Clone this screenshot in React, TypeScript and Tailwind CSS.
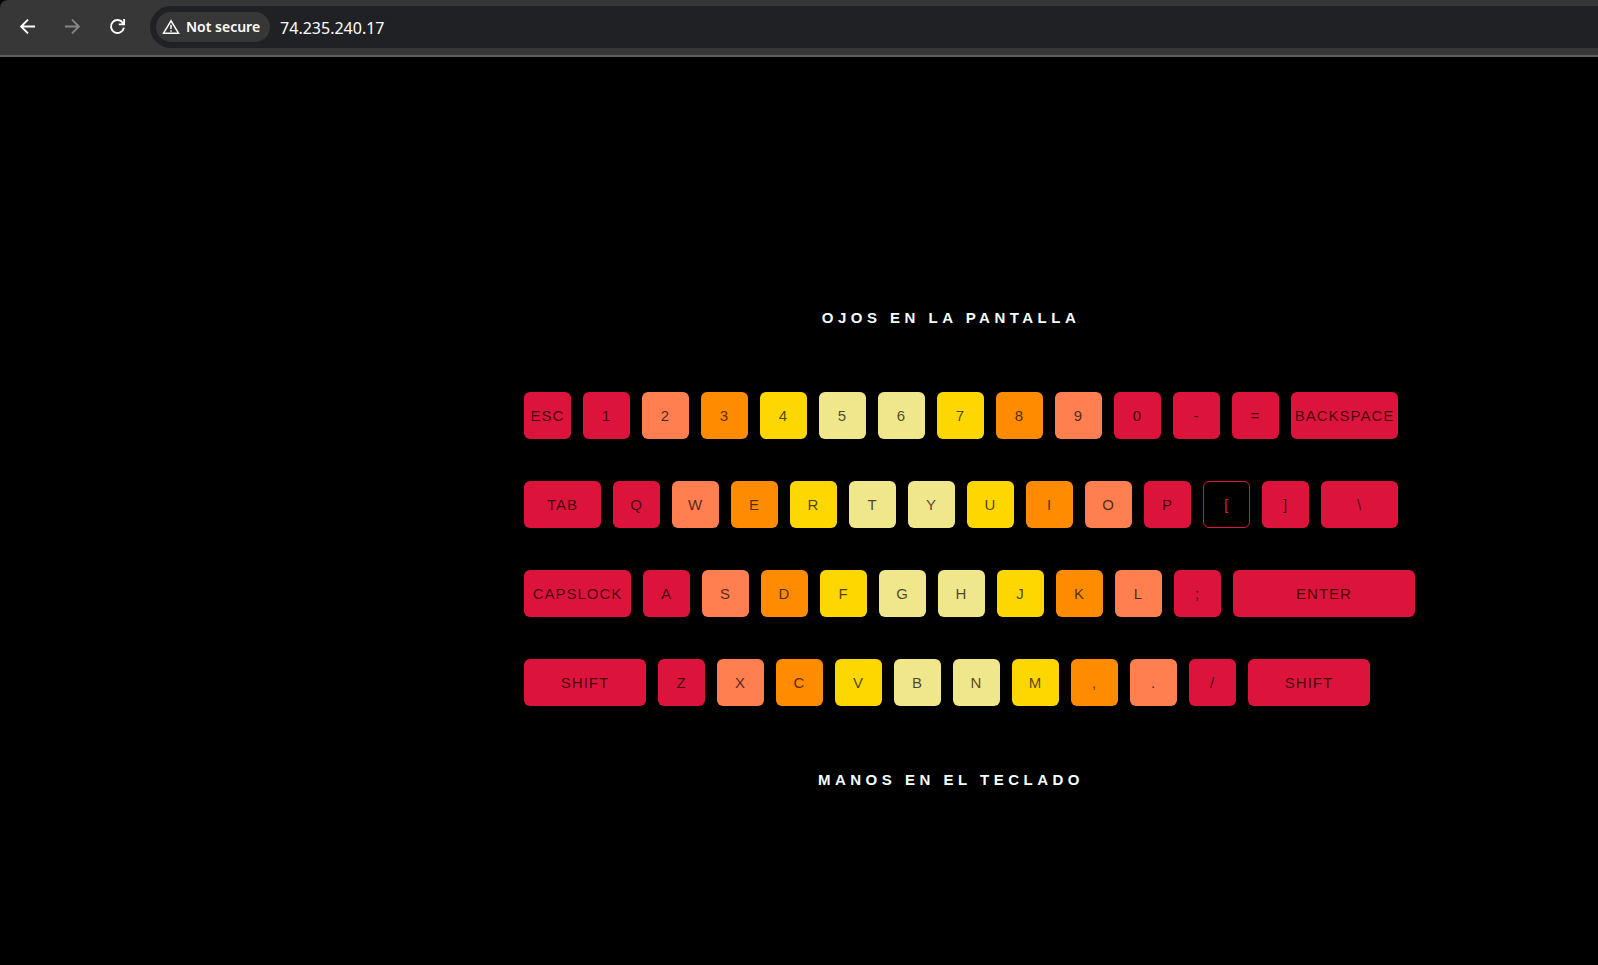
import type { ReactNode } from "react";

const crimson = "bg-[#dc143c] text-black/70";
const coral = "bg-[#ff7f50] text-black/70";
const orange = "bg-[#ff8c00] text-black/70";
const gold = "bg-[#ffd700] text-black/70";
const khaki = "bg-[#f0e68c] text-black/70";
const selected = "border border-[#dc143c] bg-transparent text-[#dc143c]";

const fingerColors = [crimson, coral, orange, gold, khaki, khaki, gold, orange, coral, crimson];

type KeySpec = { label: string; color: string; width: string };

const unit = "w-[47px]";

function letters(chars: string): KeySpec[] {
  return chars.split("").map((label, i) => ({ label, color: fingerColors[i] ?? crimson, width: unit }));
}

function wide(label: string, width: string): KeySpec {
  return { label, color: crimson, width };
}

const rows: KeySpec[][] = [
  [wide("ESC", unit), ...letters("1234567890-="), wide("BACKSPACE", "w-[107px]")],
  [
    wide("TAB", "w-[77px]"),
    ...letters("QWERTYUIOP"),
    { label: "[", color: selected, width: unit },
    wide("]", unit),
    wide("\\", "w-[77px]"),
  ],
  [wide("CAPSLOCK", "w-[107px]"), ...letters("ASDFGHJKL;"), wide("ENTER", "w-[182px]")],
  [wide("SHIFT", "w-[122px]"), ...letters("ZXCVBNM,./"), wide("SHIFT", "w-[122px]")],
];

function Key({ label, color, width }: KeySpec) {
  return (
    <button
      type="button"
      className={`flex h-[47px] shrink-0 items-center justify-center rounded-md pt-0.5 text-[15px] tracking-[1px] ${width} ${color}`}
    >
      {label}
    </button>
  );
}

function NavIcon({ children }: { children: ReactNode }) {
  return (
    <svg viewBox="0 0 24 24" className="size-6" fill="none" stroke="currentColor" strokeWidth="1.9" aria-hidden="true">
      {children}
    </svg>
  );
}

function BrowserBar() {
  return (
    <header className="bg-black">
      <div className="flex items-center rounded-tl-lg border-b-2 border-[#5f5f5f] bg-[#373737] pt-1.5 pb-[7px] pl-4 font-['Noto_Sans',sans-serif] text-white">
        <nav className="flex items-center gap-[21px]">
          <button type="button" aria-label="Back">
            <NavIcon>
              <path d="M19 11.5H5M12 4.6L5.1 11.5L12 18.4" />
            </NavIcon>
          </button>
          <button type="button" aria-label="Forward" className="text-[#868686]">
            <NavIcon>
              <path d="M4 11.5H18M11 4.6L17.9 11.5L11 18.4" />
            </NavIcon>
          </button>
          <button type="button" aria-label="Reload">
            <NavIcon>
              <path d="M17 8A6.5 6.5 0 1 0 17.9 12.6" />
              <path d="M18.1 4V9.4H12.8" />
              <path d="M17.9 6.2V9.4H14.8z" fill="currentColor" stroke="none" />
            </NavIcon>
          </button>
        </nav>
        <div className="ml-5 flex h-[42px] min-w-0 grow items-center gap-2.5 rounded-l-full bg-[#202124] pl-1.5">
          <button
            type="button"
            className="flex h-[30px] shrink-0 items-center gap-1.5 rounded-full bg-[#373737] pr-2.5 pl-1.5 text-sm font-semibold"
          >
            <svg viewBox="0 0 18 18" className="size-[18px]" fill="none" stroke="currentColor" strokeWidth="1.5" aria-hidden="true">
              <path d="M9 2.8L1.5 15.2H16.5z" />
              <path d="M9 6.8V11M9 12.2V13.7" />
            </svg>
            Not secure
          </button>
          <input
            type="text"
            aria-label="Address"
            defaultValue="74.235.240.17"
            className="min-w-0 grow bg-transparent pt-0.5 text-base outline-none"
          />
        </div>
      </div>
    </header>
  );
}

export default function App() {
  return (
    <div className="flex min-h-screen flex-col overflow-x-hidden bg-black">
      <BrowserBar />
      <main className="grow pt-[251px] pb-16 pl-[max(16px,calc(50%-275px))] font-['Liberation_Sans',Arial,sans-serif]">
        <div className="flex w-[854px] flex-col gap-16">
          <h1 className="text-center text-[15px] leading-5 font-bold tracking-[0.3em] text-[#f5fffa]">
            OJOS EN LA PANTALLA
          </h1>
          <div className="flex flex-col gap-[42px]">
            {rows.map((row, r) => (
              <div key={r} className="flex gap-3">
                {row.map((k, i) => (
                  <Key key={i} {...k} />
                ))}
              </div>
            ))}
          </div>
          <h2 className="text-center text-[15px] leading-5 font-bold tracking-[0.3em] text-[#f5fffa]">
            MANOS EN EL TECLADO
          </h2>
        </div>
      </main>
    </div>
  );
}
